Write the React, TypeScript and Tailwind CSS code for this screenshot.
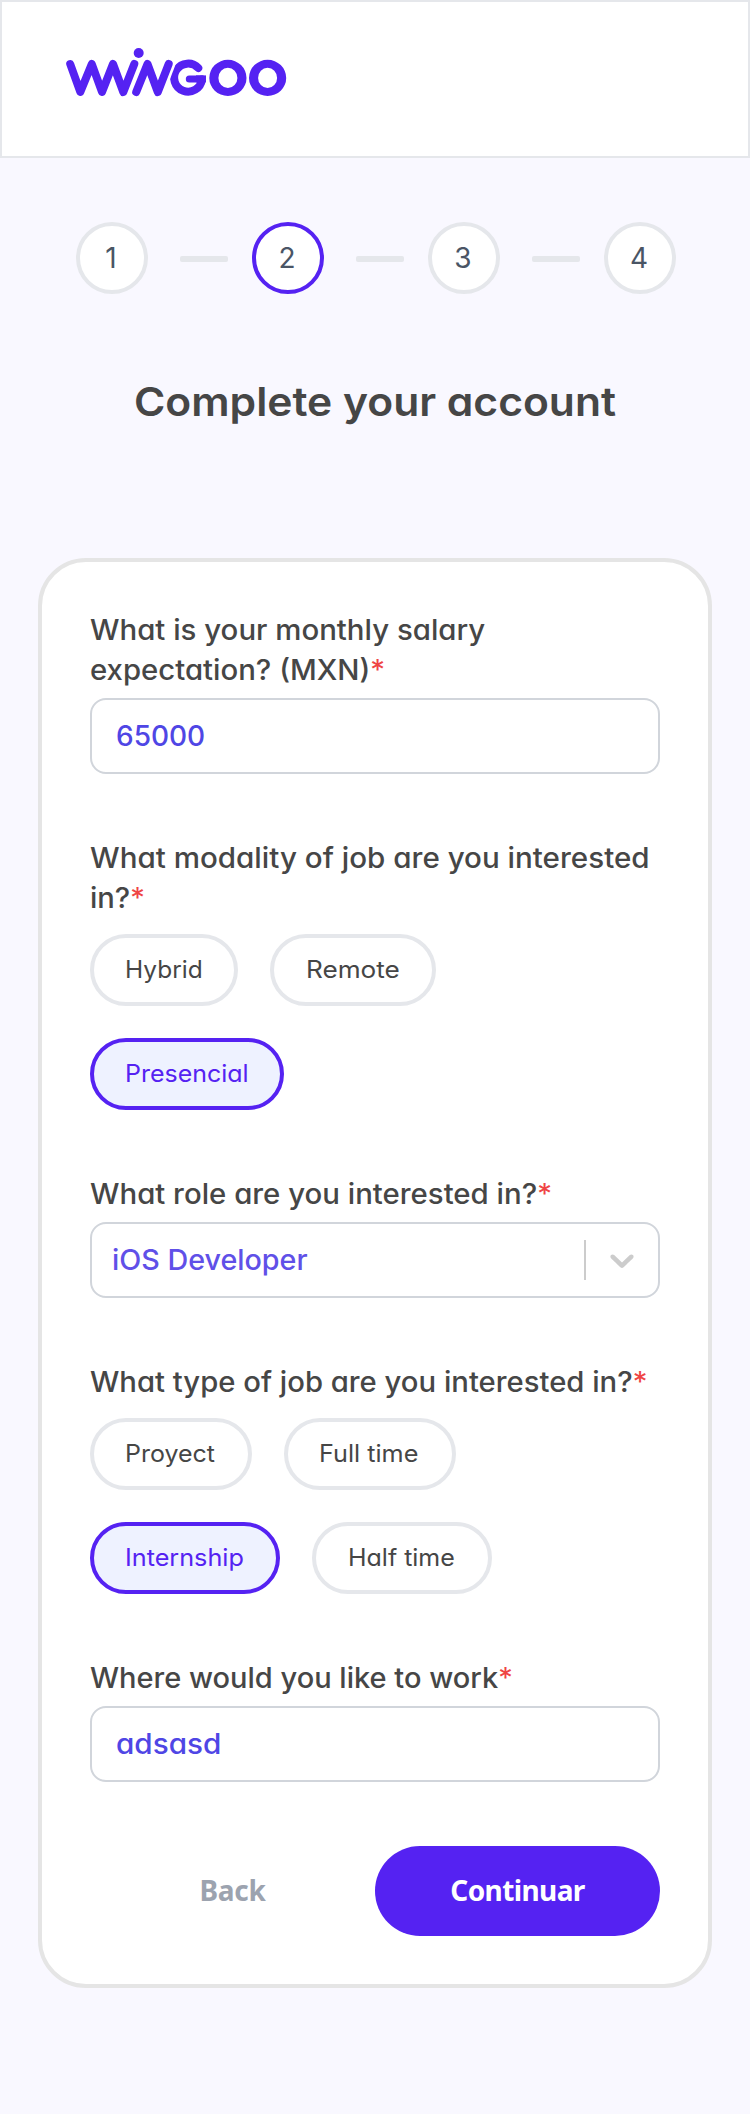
import type { ReactNode } from "react";
import clsx from "clsx";

function Logo() {
  return (
    <svg width="224" height="52" viewBox="64 46 224 52" role="img" aria-label="WINGOO">
      <g fill="none" stroke="#5522f2" strokeWidth="8" strokeLinecap="round" strokeLinejoin="round">
        <path d="M198.3 68A14 14 0 1 0 202 79.5" />
        <path d="M189.3 78.9H202" strokeWidth="7" />
        <path d="M196 78.9H206" strokeWidth="7" strokeLinecap="butt" />
        <path d="M155 99.3L172.3 54" stroke="#ffffff" strokeWidth="13.6" strokeLinecap="butt" />
        <path d="M70.2 64L80.3 92L91.8 64L102 92L113 64L123.3 92L134.3 64" />
        <path d="M136.2 92L147.5 64L157.8 92L168.7 64" />
      </g>
      <g fill="#5522f2" fillRule="evenodd">
        <circle cx="138.7" cy="53" r="5" />
        <path d="M227.9 59.8a18.6 18.1 0 1 0 0 36.2a18.6 18.1 0 1 0 0-36.2zM227.9 67.7a9.5 10.2 0 1 1 0 20.4a9.5 10.2 0 1 1 0-20.4z" />
        <path d="M267.6 59.8a18.6 18.1 0 1 0 0 36.2a18.6 18.1 0 1 0 0-36.2zM267.6 67.7a9.5 10.2 0 1 1 0 20.4a9.5 10.2 0 1 1 0-20.4z" />
      </g>
    </svg>
  );
}

function Step({ n, active }: { n: number; active?: boolean }) {
  return (
    <div
      className={clsx(
        "flex size-[72px] items-center justify-center rounded-full border-4 bg-white pr-0.5 text-[28px] text-gray-600",
        active ? "border-[#5522f2]" : "border-[#e5e7eb]",
      )}
    >
      {n}
    </div>
  );
}

function StepBar() {
  return <div className="mt-0.5 mr-6 ml-8 h-1.5 w-12 rounded-xs bg-[#e5e7eb]" />;
}

function Line({ className, required, children }: { className: string; required?: boolean; children: ReactNode }) {
  return (
    <span
      className={clsx(
        "block origin-left text-[28px] leading-10 font-medium whitespace-nowrap text-[#464646]",
        className,
      )}
    >
      {children}
      {required && <span className="font-normal text-[#ef4444]">*</span>}
    </span>
  );
}

function Pill({
  className,
  textClass,
  selected,
  children,
}: {
  className: string;
  textClass: string;
  selected?: boolean;
  children: ReactNode;
}) {
  return (
    <button
      className={clsx(
        "h-[72px] rounded-full border-4 pl-[31px] text-left text-2xl whitespace-nowrap",
        selected ? "border-[#5522f2] bg-[#eef2ff] text-[#5522f2]" : "border-[#e5e7eb] bg-white text-[#464646]",
        className,
      )}
    >
      <span className={clsx("inline-block origin-left", textClass)}>{children}</span>
    </button>
  );
}

function Field({ className, children }: { className?: string; children: ReactNode }) {
  return (
    <div
      className={clsx(
        "mt-2 flex h-[76px] items-center rounded-2xl border-2 border-[#d1d5db] bg-white text-[28px] font-medium text-[#4f46e5]",
        className,
      )}
    >
      {children}
    </div>
  );
}

export default function App() {
  return (
    <div className="min-h-[2114px] w-[750px] bg-[#f9f8ff] font-['Inter',sans-serif] [font-feature-settings:'cv11']">
      <header className="h-[158px] border-2 border-[#e5e7eb] bg-white pt-11 pl-[62px]">
        <Logo />
      </header>

      <nav className="mt-16 flex items-center justify-center pl-[2px]">
        <Step n={1} />
        <StepBar />
        <Step n={2} active />
        <StepBar />
        <Step n={3} />
        <StepBar />
        <Step n={4} />
      </nav>

      <h1 className="mt-[78px] scale-x-[1.064] text-center text-[40px] leading-[60px] font-semibold text-[#464646]">
        Complete your account
      </h1>

      <main className="mx-[38px] mt-[126px] flex flex-col gap-16 rounded-[48px] border-4 border-[#e5e5e5] bg-white p-12">
        <section>
          <Line className="scale-x-[1.05]">What is your monthly salary</Line>
          <Line className="scale-x-[1.048]" required>
            expectation? (MXN)
          </Line>
          <Field className="pl-6">65000</Field>
        </section>

        <section>
          <Line className="scale-x-[1.056]">What modality of job are you interested</Line>
          <Line className="scale-x-[1.04]" required>
            in?
          </Line>
          <div className="mt-4 flex flex-wrap gap-8">
            <Pill className="w-[148px]" textClass="scale-x-[1.02]">Hybrid</Pill>
            <Pill className="w-[166px]" textClass="translate-x-px scale-x-[1.09]">Remote</Pill>
            <Pill className="w-[194px]" textClass="scale-x-[1.04]" selected>Presencial</Pill>
          </div>
        </section>

        <section>
          <Line className="scale-x-[1.049]" required>
            What role are you interested in?
          </Line>
          <Field className="pr-4 pl-5">
            <span className="flex-1 origin-left scale-x-[1.025] text-[#6050e8]">iOS Developer</span>
            <span className="h-10 w-0.5 bg-[#cccccc]" />
            <svg className="ml-4 size-10" viewBox="0 0 20 20" fill="#cccccc">
              <path d="M4.516 7.548c0.436-0.446 1.043-0.481 1.576 0l3.908 3.747 3.908-3.747c0.533-0.481 1.141-0.446 1.574 0 0.436 0.445 0.408 1.197 0 1.615-0.406 0.418-4.695 4.502-4.695 4.502-0.217 0.223-0.502 0.335-0.787 0.335s-0.57-0.112-0.789-0.335c0 0-4.287-4.084-4.695-4.502s-0.436-1.17 0-1.615z" />
            </svg>
          </Field>
        </section>

        <section>
          <Line className="scale-x-[1.045]" required>
            What type of job are you interested in?
          </Line>
          <div className="mt-4 flex flex-wrap gap-8 pr-28">
            <Pill className="w-[162px]" textClass="scale-x-[1.04]">Proyect</Pill>
            <Pill className="w-[172px]" textClass="scale-x-[1.05]">Full time</Pill>
            <Pill className="w-[190px]" textClass="scale-x-[1.05]" selected>Internship</Pill>
            <Pill className="w-[180px]" textClass="translate-x-px scale-x-[1.04]">Half time</Pill>
          </div>
        </section>

        <section>
          <Line className="scale-x-[1.036]" required>
            Where would you like to work
          </Line>
          <Field className="pl-6">
            <span className="origin-left scale-x-[1.06]">adsasd</span>
          </Field>
        </section>

        <div className="grid h-[90px] grid-cols-2 font-['Noto_Sans',sans-serif] text-[28px] font-bold">
          <button className="pb-[3px] tracking-[-0.3px] text-[#9ca3af]">Back</button>
          <button className="rounded-full bg-[#5522f2] pb-[3px] tracking-[-0.6px] text-white">Continuar</button>
        </div>
      </main>
    </div>
  );
}
